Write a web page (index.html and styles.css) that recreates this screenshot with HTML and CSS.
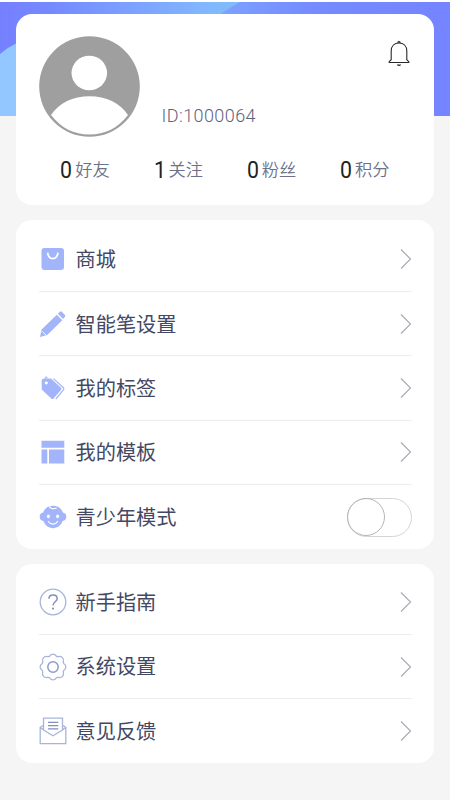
FILE: index.html
```html
<!DOCTYPE html>
<html lang="zh-CN">
<head>
<meta charset="utf-8">
<meta name="viewport" content="width=device-width, initial-scale=1">
<title>我的</title>
<link rel="stylesheet" href="styles.css">
</head>
<body>
<svg class="banner" viewBox="0 0 450 114" preserveAspectRatio="none" aria-hidden="true">
  <defs>
    <linearGradient id="left" gradientUnits="userSpaceOnUse" x1="0" y1="0" x2="240" y2="0"><stop offset="0" stop-color="#7580ff"/><stop offset=".2" stop-color="#7589ff"/><stop offset=".85" stop-color="#82b6ff"/><stop offset="1" stop-color="#80bdf8"/></linearGradient>
    <linearGradient id="right" gradientUnits="userSpaceOnUse" x1="220" y1="0" x2="450" y2="0"><stop offset="0" stop-color="#7da2ff"/><stop offset=".4" stop-color="#758bff"/><stop offset="1" stop-color="#7584ff"/></linearGradient>
  </defs>
  <path fill="url(#right)" d="M0 0h450v114H0z"/>
  <path fill="url(#left)" d="M0 0h240Q229 6 219 13V114H0z"/>
  <path fill="#92c7ff" d="M0 52Q8 45 17 41L60 60v54H0z"/>
</svg>
<main class="page">
  <section class="card profile">
    <div class="identity">
      <svg class="avatar" viewBox="0 0 101 101"><circle cx="50.5" cy="50.5" r="50.3" fill="#9f9f9f"/><ellipse cx="50.3" cy="37" rx="17.8" ry="17.2" fill="#fff"/><path d="M12 79C20 67 34 60.3 50.5 60.3S81 67 89 79C79 92 66 98.6 50.5 98.6S22 92 12 79z" fill="#fff"/></svg>
      <span class="user-id">ID:1000064</span>
      <svg class="bell" viewBox="0 0 24 28" fill="none" stroke="#28282b" stroke-width="1.1"><path d="M4.2 19.7V11.2C4.2 6 7.5 3 12 3s7.800 3 7.800 8.200V19.700L21.800 21.700V22.500H2.200V21.700z"/><path d="M10.200 2.700a1.800 1.800 0 0 1 3.600 0zM9.700 24.400h4.600Q13.500 26 12 26T9.700 24.400z" fill="#28282b" stroke="none"/></svg>
    </div>
    <div class="stats">
      <div class="stat"><b>0</b><span>好友</span></div>
      <div class="stat"><b>1</b><span>关注</span></div>
      <div class="stat"><b>0</b><span>粉丝</span></div>
      <div class="stat"><b>0</b><span>积分</span></div>
    </div>
  </section>

  <section class="card menu">
    <div class="row">
      <svg class="icon" viewBox="0 0 28 28"><rect x="2.500" y="3" width="22.500" height="22" rx="3" fill="#a3b5fa"/><path d="M8.800 8.300c1 7 9 7 10 0" fill="none" stroke="#fff" stroke-width="1.800" stroke-linecap="round"/></svg>
      <span class="label">商城</span><svg class="arrow" viewBox="0 0 12 22"><path d="M1 1.500 10.500 11 1 20.500"/></svg>
    </div>
    <div class="row">
      <svg class="icon" viewBox="0 0 28 28" fill="#a3b5fa"><path d="M17.800 4.700 23.300 10.200 8.200 25 1 27 2.600 19.500z"/><path d="m18.800 3.700 1.800-1.800q1.200-1.100 2.400 0l2.800 2.800q1.200 1.200 0 2.400l-1.700 1.900z"/><path d="m2.700 21.100 4.800 4.300" stroke="#fff" stroke-width=".8"/></svg>
      <span class="label">智能笔设置</span><svg class="arrow" viewBox="0 0 12 22"><path d="M1 1.500 10.500 11 1 20.500"/></svg>
    </div>
    <div class="row">
      <svg class="icon" viewBox="0 0 28 28"><path d="M2.700 6.500q0-1.700 1.700-1.700L12 4.500 22 13.700q1.100 1.100 0 2.200l-7.500 8.700q-1.100 1-2.200 0L2.700 15.500z" fill="#a3b5fa"/><path d="M14.500 4.600 24.400 13.700q1 1.100 0 2.200L16.800 25" fill="none" stroke="#a3b5fa" stroke-width="1.200"/><circle cx="7.300" cy="8.800" r="1.600" fill="#fff"/><path d="M6.200 7.500 6 4Q6.500 2 8 3.300L8.400 8" fill="none" stroke="#a3b5fa" stroke-width="1"/></svg>
      <span class="label">我的标签</span><svg class="arrow" viewBox="0 0 12 22"><path d="M1 1.500 10.500 11 1 20.500"/></svg>
    </div>
    <div class="row">
      <svg class="icon" viewBox="0 0 28 28" fill="#a3b5fa"><path d="M2.500 2.800h22.800v7H2.500zM2.500 11.600h5.800v14H2.500zM10 11.600h15.300v14H10z"/></svg>
      <span class="label">我的模板</span><svg class="arrow" viewBox="0 0 12 22"><path d="M1 1.500 10.500 11 1 20.500"/></svg>
    </div>
    <div class="row">
      <svg class="icon" viewBox="0 0 28 28"><path d="M14 2.800c5 0 8.500 2.700 9.800 6.800 2.200.2 3.500 2 3.500 4.100 0 2.300-1.400 4-3.700 4.400-1.500 4.200-5.200 7.100-9.600 7.100s-8.100-2.900-9.600-7.100C2.100 17.700.7 16 .7 13.700c0-2.100 1.300-3.900 3.500-4.100C5.500 5.500 9 2.800 14 2.800z" fill="#a3b5fa"/><g fill="none" stroke="#fff"><path d="M10.300 2.800c.2 2.700 3.800 3.700 7.400 2.200" stroke-width="1.200"/><path d="M9.300 18.500c2.300 3.500 7.100 3.500 9.400 0" stroke-width="1.300" stroke-linecap="round"/></g><ellipse cx="9.400" cy="13.300" rx="1.500" ry="1.900" fill="#fff"/><ellipse cx="18.600" cy="13.300" rx="1.500" ry="1.900" fill="#fff"/></svg>
      <span class="label">青少年模式</span><span class="switch" role="switch" aria-checked="false"><i></i></span>
    </div>
  </section>

  <section class="card menu">
    <div class="row">
      <svg class="icon" viewBox="0 0 28 28" fill="none"><circle cx="14" cy="14" r="12.800" stroke="#a7b5da" stroke-width="1.300"/><path d="M9.900 10.800C10 8.400 11.700 7.100 14 7.100s4.200 1.400 4.200 3.500c0 3.200-4.200 3.200-4.200 6.900" stroke="#858dbe" stroke-width="1.500"/><circle cx="14" cy="20.500" r="1.100" fill="#858dbe"/></svg>
      <span class="label">新手指南</span><svg class="arrow" viewBox="0 0 12 22"><path d="M1 1.500 10.500 11 1 20.500"/></svg>
    </div>
    <div class="row">
      <svg class="icon" viewBox="0 0 28 28" fill="none"><path d="M10.800 3C12.200.5 15.800.5 17.200 3Q18 4 19.500 3.600C22.500 2.800 25.200 5.500 24.400 8.500Q24 10 25 10.800C27.500 12.200 27.500 15.800 25 17.200Q24 18 24.400 19.500C25.200 22.500 22.500 25.200 19.500 24.400Q18 24 17.200 25C15.800 27.500 12.200 27.500 10.800 25Q10 24 8.500 24.400C5.500 25.200 2.800 22.500 3.600 19.500Q4 18 3 17.200C.5 15.800.5 12.200 3 10.800Q4 10 3.600 8.500C2.800 5.500 5.500 2.800 8.500 3.600Q10 4 10.800 3z" stroke="#a7b5da" stroke-width="1.300"/><circle cx="14" cy="14" r="5.200" stroke="#8d99c9" stroke-width="1.500"/></svg>
      <span class="label">系统设置</span><svg class="arrow" viewBox="0 0 12 22"><path d="M1 1.500 10.500 11 1 20.500"/></svg>
    </div>
    <div class="row">
      <svg class="icon" viewBox="0 0 28 28" fill="none" stroke="#a7b5da" stroke-width="1.300"><path d="M4.500 8.200 1.200 10.300v16.300h25.600V10.300L23.500 8.200M1.200 10.300 4.500 13 14 18.800 23.500 13l3.300-2.700M4.500 13V1.200h19V13"/><path d="M9 5.300h10.300M9 8.600h10.300M9 11.900h10.300" stroke="#8390bf"/></svg>
      <span class="label">意见反馈</span><svg class="arrow" viewBox="0 0 12 22"><path d="M1 1.500 10.500 11 1 20.500"/></svg>
    </div>
  </section>
</main>
</body>
</html>
```
FILE: styles.css
```css
* { box-sizing: border-box; }
body {
  margin: 0;
  min-height: 800px;
  background: #f5f5f5;
  border-top: 2px solid #fff;
  font-family: Roboto, "Noto Sans CJK SC", sans-serif;
  color: #444863;
}
.banner {
  display: block;
  width: 100%;
  height: 114px;
  margin-bottom: -114px;
}
.page {
  position: relative;
  display: flex;
  flex-direction: column;
  gap: 15px;
  padding: 12px 16.500px 0 16px;
}
.card { background: #fff; border-radius: 16px; padding: 0 22px 0 22.500px; }
.profile { height: 191px; padding-top: 22px; }
.identity { display: flex; height: 101px; }
.avatar { width: 101px; height: 101px; }
.user-id {
  align-self: flex-end;
  margin: 0 auto 11px 22px;
  font-size: 18px;
  line-height: 20px;
  font-weight: 300;
  letter-spacing: .42px;
  color: #5f627e;
}
.bell { width: 24px; height: 28px; margin: 4px 1px 0 0; }
.stats { display: grid; grid-template-columns: repeat(4, 1fr); margin: 19px .5px 0 -.5px; }
.stat {
  display: flex;
  align-items: center;
  justify-content: center;
  gap: 2px;
  height: 28px;
}
.stat b { font-size: 24.500px; line-height: 26px; margin-bottom: 1px; font-weight: 400; color: #222; transform: scaleX(.87); }
.stat span { font-size: 17.300px; line-height: 24px; font-weight: 350; color: #6d718a; }
.menu { height: 328.500px; padding-top: 7.500px; }
.menu + .menu { height: 199.500px; padding-top: 7px; }
.row {
  display: flex;
  align-items: center;
  height: 64.400px;
  border-bottom: 1px solid #ededf0;
}
.row:last-child { border-bottom: 0; }
.icon { width: 28px; height: 28px; }
.label { margin: 0 auto 0 9px; padding-top: 2px; font-size: 20.200px; line-height: 30px; }
.menu + .menu .label { padding-top: 1.500px; }
.arrow {
  width: 12px;
  height: 22px;
  fill: none;
  stroke: #a9acb5;
  stroke-width: 1.200;
}
.switch {
  width: 65px;
  height: 39px;
  border: 1px solid #d5d5d5;
  border-radius: 20px;
}
.switch i {
  display: block;
  width: 38px;
  height: 38px;
  margin: -.5px 0 0 -1px;
  border: 1px solid #b5b5b5;
  border-radius: 50%;
}
```
